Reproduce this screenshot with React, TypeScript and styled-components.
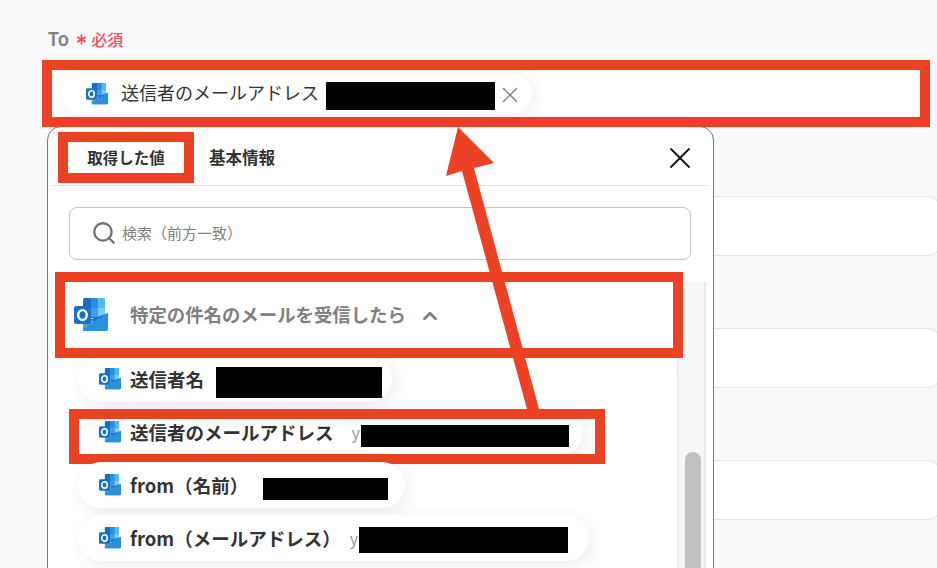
import React from 'react';
import styled, { createGlobalStyle } from 'styled-components';
import { Asterisk, ChevronUp, Search, X } from 'lucide-react';

const accent = '#ec4125';

const GlobalStyle = createGlobalStyle`
  html, body {
    margin: 0;
    padding: 0;
    background: #f9f9f9;
  }
  * {
    box-sizing: border-box;
  }
`;

const Page = styled.div`
  position: relative;
  width: 937px;
  height: 568px;
  overflow: hidden;
  background: #f9f9f9;
  font-family: "Noto Sans CJK JP", "Noto Sans", sans-serif;
`;

const Label = styled.div`
  display: flex;
  align-items: center;
  height: 60px;
  padding: 18px 0 0 48px;
  color: #808080;
  font-family: "Noto Sans", sans-serif;
  font-size: 19px;
  font-weight: 600;
`;

const Required = styled.span`
  display: flex;
  align-items: center;
  gap: 1px;
  margin-left: 4px;
  color: #ef5261;
  font-family: "Noto Sans CJK JP", sans-serif;
  font-size: 16px;
  font-weight: 500;
`;

const RecipientField = styled.div`
  position: relative;
  z-index: 2;
  display: flex;
  align-items: center;
  width: 888px;
  height: 67px;
  margin-left: 42px;
  padding-left: 10px;
  background: #fff;
  border: 10px solid ${accent};
`;

const Chip = styled.div<{ $width: number }>`
  flex: none;
  display: flex;
  align-items: center;
  width: ${(p) => p.$width}px;
  height: 41px;
  padding-left: 24px;
  border-radius: 21px;
  background: #fff;
  box-shadow: 3px 3px 16px rgba(0, 0, 0, 0.07);
`;

const ChipText = styled.span`
  margin: 0 0 4px 13px;
  color: #333;
  font-size: 18px;
  white-space: nowrap;
`;

// $drop pushes the bar below the centre line, the redactions do not sit on the text line
const Redacted = styled.span<{ $width: number; $height: number; $gap: number; $drop: number }>`
  flex: none;
  display: block;
  width: ${(p) => p.$width}px;
  height: ${(p) => p.$height}px;
  margin-left: ${(p) => p.$gap}px;
  margin-top: ${(p) => p.$drop * 2}px;
  background: #000;
`;

const RemoveButton = styled.span`
  display: flex;
  margin: 2px 0 0 2px;
  color: #858585;
`;

const Content = styled.div`
  display: flex;
  margin-top: -1px;
`;

const Panel = styled.div`
  flex: none;
  display: flex;
  flex-direction: column;
  width: 667px;
  height: 460px;
  margin-left: 47px;
  border: 1.5px solid #777;
  border-radius: 14px 14px 0 0;
  background: #fff;
`;

const TabBar = styled.div`
  flex: none;
  display: flex;
  align-items: flex-start;
  height: 59px;
  margin: 0 5px 0 4px;
  padding: 5px 0 0 6px;
  border-bottom: 1.5px solid #e4e4e4;
`;

const ActiveTab = styled.div`
  display: flex;
  align-items: center;
  justify-content: center;
  width: 136px;
  height: 51px;
  padding-bottom: 2px;
  border: 10px solid ${accent};
  color: #333;
  font-size: 15.5px;
  font-weight: 700;
`;

const Tab = styled.div`
  display: flex;
  align-items: center;
  height: 49px;
  margin-left: 15px;
  color: #333;
  font-size: 16.5px;
  font-weight: 700;
`;

const CloseButton = styled.span`
  display: flex;
  margin: 8px 10px 0 auto;
  color: #111;
`;

const SearchBox = styled.div`
  flex: none;
  display: flex;
  align-items: center;
  width: 622px;
  height: 53px;
  margin: 20.5px 0 12px 21px;
  padding-left: 21px;
  border: 1.5px solid #c6c6c6;
  border-radius: 8px;
  color: #808080;
  font-size: 15px;
`;

const SearchLabel = styled.span`
  margin: 0 0 2px 5px;
`;

const ListArea = styled.div`
  flex: 1;
  display: flex;
  min-height: 0;
`;

const List = styled.div`
  flex: none;
  display: flex;
  flex-direction: column;
  width: 629px;
`;

const SectionHeader = styled.div`
  position: relative;
  z-index: 1;
  flex: none;
  display: flex;
  align-items: center;
  width: 628px;
  height: 86px;
  margin-left: 7px;
  padding-left: 9px;
  border: 10px solid ${accent};
  background: #fff;
  color: #808080;
  font-size: 18.4px;
  font-weight: 700;
`;

const SectionTitle = styled.span`
  margin: 0 13px 1px 22px;
  white-space: nowrap;
`;

const SectionToggle = styled.span`
  display: flex;
  margin-top: 3px;
`;

const Values = styled.div`
  display: flex;
  flex-direction: column;
  gap: 7px;
  margin: -2px 0 0 30px;
`;

const ValueChip = styled.div<{ $width: number; $marked?: boolean }>`
  position: relative;
  flex: none;
  display: flex;
  align-items: center;
  width: ${(p) => p.$width}px;
  height: 46px;
  padding-left: 21px;
  border-radius: 23px;
  background: #fff;
  box-shadow: 3px 4px 16px rgba(0, 0, 0, 0.08);
  color: #333;
  font-size: 18.5px;
  font-weight: 700;
  white-space: nowrap;

  ${(p) =>
    p.$marked &&
    `
    &::after {
      content: "";
      position: absolute;
      box-sizing: border-box;
      top: 0;
      left: -9.5px;
      width: 536px;
      height: 55px;
      border: 10px solid ${accent};
    }
  `}
`;

const ValueLabel = styled.span`
  margin-left: 9px;
`;

const ValueHint = styled.span<{ $gap: number }>`
  flex: none;
  width: 9px;
  margin-left: ${(p) => p.$gap}px;
  color: #999;
  font-size: 16px;
  font-weight: 400;
`;

const ScrollTrack = styled.div`
  flex: none;
  width: 29px;
  margin-top: 10px;
  padding: 170px 6px 0;
  border: solid #e9e9e9;
  border-width: 0 2px;
  background: #f7f7f7;
`;

const ScrollThumb = styled.div`
  width: 16px;
  height: 200px;
  border-radius: 8px;
  background: #c0c0c0;
`;

const SideColumn = styled.div`
  flex: none;
  display: flex;
  flex-direction: column;
  gap: 72px;
  padding-top: 70px;
`;

const GhostField = styled.div`
  width: 225px;
  height: 60px;
  border: 1.5px solid #e2e4ea;
  border-left: none;
  border-radius: 0 10px 10px 0;
  background: #fff;
`;

const ArrowLayer = styled.svg`
  position: absolute;
  top: 0;
  left: 0;
  z-index: 3;
  pointer-events: none;
`;

function OutlookIcon ({ size }: { size: number }): React.ReactElement {
  return (
    <svg width={size} height={size} viewBox="0 0 34 34" style={{ flex: 'none' }}>
      <rect x="9" y="0" width="22" height="20" rx="1.5" fill="#1a6fc4" />
      <rect x="17" y="0" width="7" height="10" fill="#2a8fe0" />
      <rect x="24" y="0" width="7" height="10" fill="#56b8f0" />
      <rect x="17" y="10" width="7" height="9" fill="#3a9fe6" />
      <rect x="24" y="10" width="7" height="9" fill="#7ccdf5" />
      <path d="M9 17l11 7 14-9v16a2 2 0 0 1-2 2H11a2 2 0 0 1-2-2z" fill="#3ea6ea" />
      <path d="M9 33h23a2 2 0 0 0 2-2V15L9 31z" fill="#2a90dc" />
      <path d="M34 15L20 24l-4-2.6z" fill="#1a78c8" />
      <rect x="0" y="8" width="17" height="18" rx="2" fill="#1a72c8" />
      <ellipse cx="8.5" cy="17" rx="4.3" ry="4.9" fill="none" stroke="#fff" strokeWidth="2.4" />
    </svg>
  );
}

function App (): React.ReactElement {
  return (
    <Page>
      <GlobalStyle />
      <Label>
        To
        <Required>
          <Asterisk size={17} strokeWidth={2.5} />
          必須
        </Required>
      </Label>

      <RecipientField>
        <Chip $width={470}>
          <OutlookIcon size={22} />
          <ChipText>送信者のメールアドレス</ChipText>
          <Redacted $width={169} $height={28} $gap={7} $drop={2} />
          <RemoveButton>
            <X size={26} strokeWidth={1.4} />
          </RemoveButton>
        </Chip>
      </RecipientField>

      <Content>
        <Panel>
          <TabBar>
            <ActiveTab>取得した値</ActiveTab>
            <Tab>基本情報</Tab>
            <CloseButton>
              <X size={36} strokeWidth={1.2} />
            </CloseButton>
          </TabBar>
          <SearchBox>
            <Search size={26} strokeWidth={2.1} color="#707070" />
            <SearchLabel>検索（前方一致）</SearchLabel>
          </SearchBox>
          <ListArea>
            <List>
              <SectionHeader>
                <OutlookIcon size={34} />
                <SectionTitle>特定の件名のメールを受信したら</SectionTitle>
                <SectionToggle>
                  <ChevronUp size={22} strokeWidth={3} />
                </SectionToggle>
              </SectionHeader>
              <Values>
                <ValueChip $width={314}>
                  <OutlookIcon size={22} />
                  <ValueLabel>送信者名</ValueLabel>
                  <Redacted $width={166} $height={31} $gap={12} $drop={4} />
                </ValueChip>
                <ValueChip $width={505} $marked>
                  <OutlookIcon size={22} />
                  <ValueLabel>送信者のメールアドレス</ValueLabel>
                  <ValueHint $gap={18}>y</ValueHint>
                  <Redacted $width={208} $height={22} $gap={0} $drop={4} />
                </ValueChip>
                <ValueChip $width={327}>
                  <OutlookIcon size={22} />
                  <ValueLabel>from（名前）</ValueLabel>
                  <Redacted $width={125} $height={22} $gap={15} $drop={4} />
                </ValueChip>
                <ValueChip $width={511}>
                  <OutlookIcon size={22} />
                  <ValueLabel>from（メールアドレス）</ValueLabel>
                  <ValueHint $gap={9}>y</ValueHint>
                  <Redacted $width={209} $height={26} $gap={0} $drop={2} />
                </ValueChip>
              </Values>
            </List>
            <ScrollTrack>
              <ScrollThumb />
            </ScrollTrack>
          </ListArea>
        </Panel>
        <SideColumn>
          <GhostField />
          <GhostField />
          <GhostField />
        </SideColumn>
      </Content>

      <ArrowLayer width="937" height="568" viewBox="0 0 937 568">
        <path d="M458 127L494 163L474 168L539 409H527L462 171L446 176Z" fill={accent} />
      </ArrowLayer>
    </Page>
  );
}

export default App;
